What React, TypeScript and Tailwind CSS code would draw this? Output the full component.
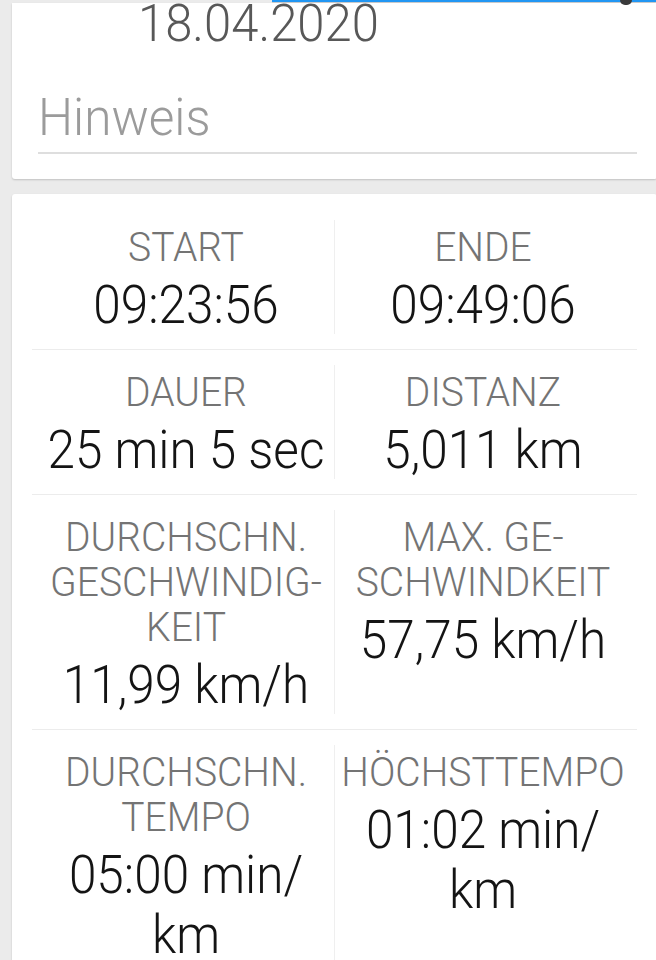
import React from "react";

type Cell = { label: string[]; value: string[] };

const ROWS: Cell[][] = [
  [
    { label: ["START"], value: ["09:23:56"] },
    { label: ["ENDE"], value: ["09:49:06"] },
  ],
  [
    { label: ["DAUER"], value: ["25 min 5 sec"] },
    { label: ["DISTANZ"], value: ["5,011 km"] },
  ],
  [
    { label: ["DURCHSCHN.", "GESCHWINDIG-", "KEIT"], value: ["11,99 km/h"] },
    { label: ["MAX. GE-", "SCHWINDKEIT"], value: ["57,75 km/h"] },
  ],
  [
    { label: ["DURCHSCHN.", "TEMPO"], value: ["05:00 min/", "km"] },
    { label: ["HÖCHSTTEMPO"], value: ["01:02 min/", "km"] },
  ],
];

function StatCell({ cell, side }: { cell: Cell; side: "left" | "right" }) {
  return (
    <div
      className={
        side === "left"
          ? "flex flex-1 flex-col items-center pl-[6px] pt-[20px] pb-[14px]"
          : "flex flex-1 flex-col items-center pr-[6px] pt-[20px] pb-[14px]"
      }
    >
      <div className="flex flex-col items-center">
        {cell.label.map((l) => (
          <div
            key={l}
            className="h-[45px] scale-y-[1.06] whitespace-nowrap text-[39px] font-light leading-[45px] text-[#747474]"
          >
            {l}
          </div>
        ))}
      </div>
      <div className="mt-[5px] flex flex-col items-center">
        {cell.value.map((v) => (
          <div
            key={v}
            className="h-[60px] scale-y-[1.07] whitespace-nowrap text-[49.5px] font-light leading-[60px] text-[#141414]"
          >
            {v}
          </div>
        ))}
      </div>
    </div>
  );
}

export default function App() {
  return (
    <div className="relative h-[960px] w-[656px] overflow-hidden bg-[#ebebeb] font-['Roboto',sans-serif]">
      {/* top bar edge */}
      <div className="h-[3px]">
        <div className="ml-[272px] h-[2px] bg-[#2196f3] shadow-[0_1px_1px_rgba(0,0,0,0.15)]" />
      </div>
      <div className="absolute left-[620px] top-0 h-[5px] w-[12px] rounded-b-full bg-[#3a3a3a]" />

      <div className="pl-[12px]">
        {/* date + note card */}
        <div className="w-[645px] rounded-b-[3px] bg-white pb-[25.5px] pl-[26px] pr-[20px] shadow-[0_1px_2px_rgba(0,0,0,0.18)]">
          <div className="h-[41px] scale-y-[1.06] pl-[100px] text-[49px] font-light leading-[41px] text-[#585858]">
            18.04.2020
          </div>
          <div className="mt-[44.5px] h-[56px] scale-y-[1.06] text-[49.5px] font-light leading-[56px] text-[#9b9b9b]">
            Hinweis
          </div>
          <div className="mt-[7.5px] h-[1.5px] bg-[#dedede]" />
        </div>

        {/* stats card */}
        <div className="mt-[15px] w-[645px] rounded-[3px] bg-white px-[20px] pt-[11px] shadow-[0_1px_2px_rgba(0,0,0,0.18)]">
          {ROWS.map((row, i) => (
            <div key={i} className="flex border-b border-[#ececec]">
              <StatCell cell={row[0]} side="left" />
              <div className="my-[15px] w-px bg-[#efefef]" />
              <StatCell cell={row[1]} side="right" />
            </div>
          ))}
        </div>
      </div>
    </div>
  );
}
